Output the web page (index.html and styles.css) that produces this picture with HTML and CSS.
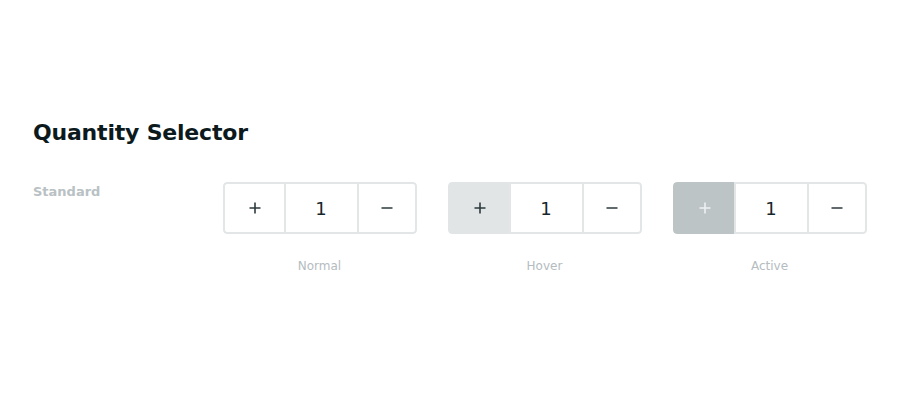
FILE: index.html
```html
<!DOCTYPE html>
<html lang="en">
<head>
<meta charset="utf-8">
<title>Quantity Selector</title>
<link rel="stylesheet" href="styles.css">
</head>
<body>
<main class="page">
  <h1 class="title">Quantity Selector</h1>
  <section class="row">
    <div class="row-label">Standard</div>
    <div class="variant">
      <div class="qty">
        <button class="qty-btn qty-plus"><svg width="12" height="12" viewBox="0 0 12 12"><path d="M6 0.5v11M0.5 6h11" stroke="currentColor" stroke-width="1.6" fill="none"/></svg></button>
        <span class="qty-value">1</span>
        <button class="qty-btn qty-minus"><svg width="12" height="12" viewBox="0 0 12 12"><path d="M0.5 6h11" stroke="currentColor" stroke-width="1.6" fill="none"/></svg></button>
      </div>
      <div class="caption">Normal</div>
    </div>
    <div class="variant">
      <div class="qty">
        <button class="qty-btn qty-plus is-hover"><svg width="12" height="12" viewBox="0 0 12 12"><path d="M6 0.5v11M0.5 6h11" stroke="currentColor" stroke-width="1.6" fill="none"/></svg></button>
        <span class="qty-value">1</span>
        <button class="qty-btn qty-minus"><svg width="12" height="12" viewBox="0 0 12 12"><path d="M0.5 6h11" stroke="currentColor" stroke-width="1.6" fill="none"/></svg></button>
      </div>
      <div class="caption">Hover</div>
    </div>
    <div class="variant">
      <div class="qty">
        <button class="qty-btn qty-plus is-active"><svg width="12" height="12" viewBox="0 0 12 12"><path d="M6 0.5v11M0.5 6h11" stroke="currentColor" stroke-width="1.6" fill="none"/></svg></button>
        <span class="qty-value">1</span>
        <button class="qty-btn qty-minus"><svg width="12" height="12" viewBox="0 0 12 12"><path d="M0.5 6h11" stroke="currentColor" stroke-width="1.6" fill="none"/></svg></button>
      </div>
      <div class="caption">Active</div>
    </div>
  </section>
</main>
</body>
</html>
```

FILE: styles.css
```css
* { box-sizing: border-box; }
html, body { margin: 0; padding: 0; background: #ffffff; }
body { font-family: "DejaVu Sans", "Noto Sans", sans-serif; color: #0e1d20; }

.page {
  padding: 117px 33px 0 33px;
}

.title {
  margin: 0;
  font-size: 22px;
  line-height: 32px;
  font-weight: 700;
  letter-spacing: -0.2px;
  color: #0c1a1d;
}

.row {
  display: grid;
  grid-template-columns: 174px 225px 225px 225px;
  margin-top: 33px;
}

.row-label {
  font-size: 13px;
  font-weight: 700;
  color: #b9c1c4;
  line-height: 18px;
  padding-top: 1px;
}

.variant {
  display: flex;
  flex-direction: column;
  align-items: center;
}

.qty {
  display: flex;
  width: 194px;
  height: 52px;
  border-radius: 4px;
  overflow: hidden;
  background: #fff;
}

.qty-btn {
  display: flex;
  align-items: center;
  justify-content: center;
  padding: 0;
  margin: 0;
  background: #fff;
  color: #2c3a3d;
  font: inherit;
  border: 2px solid #e2e6e7;
  border-radius: 0;
}
.qty-plus { width: 61px; border-right: 0; border-top-left-radius: 4px; border-bottom-left-radius: 4px; padding-left: 1px; }
.qty-minus { width: 58px; border-left: 0; border-top-right-radius: 4px; border-bottom-right-radius: 4px; }
.qty-btn.is-hover { background: #e1e5e6; border-color: #e1e5e6; }
.qty-btn.is-active { background: #bcc4c6; border-color: #bcc4c6; color: #eef1f2; }

.qty-value {
  width: 75px;
  display: flex;
  align-items: center;
  justify-content: center;
  border: 2px solid #e2e6e7;
  font-size: 18px;
  color: #16262a;
}

.caption {
  margin-top: 24px;
  font-size: 12px;
  line-height: 16px;
  color: #b4bcbf;
}
```
